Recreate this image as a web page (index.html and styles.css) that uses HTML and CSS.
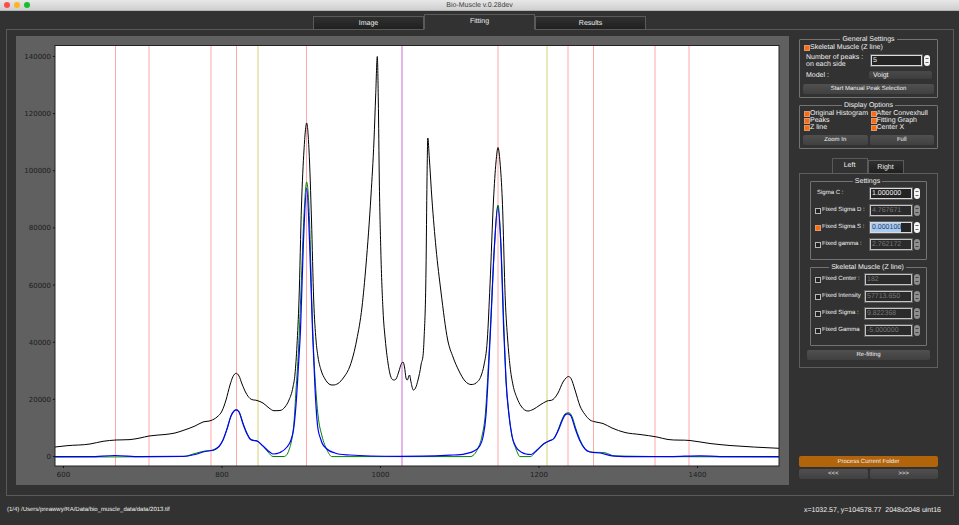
FILE: index.html
```html
<!DOCTYPE html>
<html lang="en">
<head>
<meta charset="utf-8">
<title>Bio-Muscle v.0.28dev</title>
<link rel="stylesheet" href="styles.css">
</head>
<body>
<header class="titlebar">
  <div class="lights"><i class="light close"></i><i class="light minimize"></i><i class="light expand"></i></div>
  <h1 class="title">Bio-Muscle v.0.28dev</h1>
</header>
<nav class="tabs main-tabs">
  <button class="tab">Image</button>
  <button class="tab active">Fitting</button>
  <button class="tab">Results</button>
</nav>
<main class="panel">
  <div class="chart">
    <svg viewBox="16 36 773 449" role="img" aria-label="Fitting graph">
      <rect x="55" y="45.5" width="724" height="420.5" fill="#fff"/>
      <g id="markers"></g>
      <g id="curves" fill="none" stroke-width="1" stroke-linejoin="round"></g>
      <rect x="55" y="45.5" width="724" height="420.5" fill="none" stroke="#222" stroke-width="1"/>
      <g id="axes" class="axis"></g>
    </svg>
  </div>
  <aside class="side">
    <fieldset class="group general">
      <legend>General Settings</legend>
      <label class="check"><input type="checkbox" checked>Skeletal Muscle (Z line)</label>
      <div class="row peaks">
        <label for="peaks">Number of peaks :<br>on each side</label>
        <input class="field" id="peaks" type="text" value="5">
        <span class="spin"><button aria-label="More peaks"></button><button aria-label="Fewer peaks"></button></span>
      </div>
      <div class="row model">
        <label for="model">Model :</label>
        <select id="model"><option>Voigt</option></select>
      </div>
      <button class="btn">Start Manual Peak Selection</button>
    </fieldset>
    <fieldset class="group display">
      <legend>Display Options</legend>
      <div class="pair">
        <label class="check"><input type="checkbox" checked>Original Histogram</label>
        <label class="check"><input type="checkbox" checked>After Convexhull</label>
        <label class="check"><input type="checkbox" checked>Peaks</label>
        <label class="check"><input type="checkbox" checked>Fitting Graph</label>
        <label class="check"><input type="checkbox" checked>Z line</label>
        <label class="check"><input type="checkbox" checked>Center X</label>
      </div>
      <div class="pair actions">
        <button class="btn">Zoom In</button>
        <button class="btn">Full</button>
      </div>
    </fieldset>
    <nav class="tabs side-tabs">
      <button class="tab active">Left</button>
      <button class="tab">Right</button>
    </nav>
    <section class="pane">
      <fieldset class="group params">
        <legend>Settings</legend>
        <div class="row">
          <label for="sc">Sigma C :</label>
          <input class="field" id="sc" type="text" value="1.000000">
          <span class="spin"><button aria-label="Increase"></button><button aria-label="Decrease"></button></span>
        </div>
        <div class="row">
          <label class="check"><input type="checkbox">Fixed Sigma D :</label>
          <input class="field" aria-label="Sigma D" type="text" value="4.767671" disabled>
          <span class="spin off"><button aria-label="Increase" disabled></button><button aria-label="Decrease" disabled></button></span>
        </div>
        <div class="row">
          <label class="check"><input type="checkbox" checked>Fixed Sigma S :</label>
          <input class="field selected" aria-label="Sigma S" type="text" value="0.000100">
          <span class="spin"><button aria-label="Increase"></button><button aria-label="Decrease"></button></span>
        </div>
        <div class="row">
          <label class="check"><input type="checkbox">Fixed gamma :</label>
          <input class="field" aria-label="Gamma" type="text" value="2.762172" disabled>
          <span class="spin off"><button aria-label="Increase" disabled></button><button aria-label="Decrease" disabled></button></span>
        </div>
      </fieldset>
      <fieldset class="group params wide">
        <legend>Skeletal Muscle (Z line)</legend>
        <div class="row">
          <label class="check"><input type="checkbox">Fixed Center :</label>
          <input class="field" aria-label="Center" type="text" value="182" disabled>
          <span class="spin off"><button aria-label="Increase" disabled></button><button aria-label="Decrease" disabled></button></span>
        </div>
        <div class="row">
          <label class="check"><input type="checkbox">Fixed Intensity</label>
          <input class="field" aria-label="Intensity" type="text" value="57713.650" disabled>
          <span class="spin off"><button aria-label="Increase" disabled></button><button aria-label="Decrease" disabled></button></span>
        </div>
        <div class="row">
          <label class="check"><input type="checkbox">Fixed Sigma :</label>
          <input class="field" aria-label="Sigma" type="text" value="9.822368" disabled>
          <span class="spin off"><button aria-label="Increase" disabled></button><button aria-label="Decrease" disabled></button></span>
        </div>
        <div class="row">
          <label class="check"><input type="checkbox">Fixed Gamma</label>
          <input class="field" aria-label="Gamma of Z line" type="text" value="-5.000000" disabled>
          <span class="spin off"><button aria-label="Increase" disabled></button><button aria-label="Decrease" disabled></button></span>
        </div>
      </fieldset>
      <button class="btn">Re-fitting</button>
    </section>
    <div class="process">
      <button class="btn primary">Process Current Folder</button>
      <div class="pair">
        <button class="btn">&lt;&lt;&lt;</button>
        <button class="btn">&gt;&gt;&gt;</button>
      </div>
    </div>
  </aside>
</main>
<footer class="status">
  <span class="path">(1/4) /Users/preawwy/RA/Data/bio_muscle_data/data/2013.tif</span>
  <span class="coords">x=1032.57, y=104578.77  2048x2048 uint16</span>
</footer>
<script src="chart.js"></script>
</body>
</html>
```
FILE: styles.css
```css
* { box-sizing: border-box; }

body {
  margin: 0;
  min-height: 100vh;
  display: flex;
  flex-direction: column;
  background: #323232;
  color: #f0f0f0;
  font: 7px/7px "Liberation Sans", Arial, sans-serif;
  text-rendering: geometricPrecision;
}

button, input, select {
  margin: 0;
  padding: 0;
  font: inherit;
  color: inherit;
  text-rendering: inherit;
}

.titlebar {
  height: 11px;
  display: grid;
  grid-template-columns: 1fr auto 1fr;
  align-items: center;
  background: linear-gradient(#e8e8e8, #cfcfcf);
  border-bottom: 1px solid #b4b4b4;
}
.lights { display: flex; gap: 4px; padding-left: 4px; }
.light { width: 6px; height: 6px; border-radius: 50%; }
.close { background: #fc4f4b; }
.minimize { background: #fdb524; }
.expand { background: #18bd2e; }
.title { margin: 0; font-size: 7px; font-weight: 400; color: #3c3c3c; }

.tabs { display: flex; justify-content: center; align-items: flex-end; }
.tab {
  border: 1px solid #5a5a5a;
  background: linear-gradient(#303030, #202020);
}
.tab.active {
  background: #323232;
  border-bottom-color: #323232;
}
.main-tabs { height: 19px; margin-bottom: -1px; }
.main-tabs .tab { width: 111px; height: 14px; }
.main-tabs .tab.active { height: 16px; padding-bottom: 2px; z-index: 1; }

.panel {
  flex: 1;
  display: flex;
  gap: 10px;
  margin: 0 5px 0 6px;
  padding: 6px 15px 10px 9px;
  border: 1px solid #5a5a5a;
}

.chart { flex: 1; min-width: 0; background: #606060; }
.chart svg { display: block; width: 100%; height: 100%; }
.axis { font: 7px "DejaVu Sans", sans-serif; fill: #1c1c1c; }

.side { width: 139px; display: flex; flex-direction: column; }

.group {
  min-width: 0;
  margin: 0;
  padding: 0 3px;
  border: 1px solid #737373;
  border-radius: 1px;
}
.group legend { margin: 0 auto; padding: 0 2px; }

.check { display: flex; align-items: center; height: 7px; white-space: nowrap; }
.check input {
  appearance: none;
  flex: none;
  width: 6px;
  height: 6px;
  border: 1px solid #b8b8b8;
  background: #222;
}
.check input:checked { background: #ff6a0d; border-color: #d99a72; }

.general { height: 62px; padding: 1px 3px 0; }
.general .check, .display .check { margin-left: 1px; }
.general .row label { flex: 1; padding-left: 3px; }
.peaks { height: 19px; }
.model { height: 10px; }

.row { display: flex; align-items: center; }
.field {
  height: 11px;
  padding: 0 1px;
  border: 1px solid #dcdcdc;
  outline: 1px solid #5c5c5c;
  background-color: #242424;
}
.field:disabled { color: #777; background-color: #2b2b2b; border-color: #c4c4c4; }
.selected {
  color: #26415f;
  background-image: linear-gradient(#a9cbf4, #a9cbf4);
  background-repeat: no-repeat;
  background-size: 30px 100%;
}
.spin {
  width: 6px;
  height: 11px;
  margin-left: 2px;
  display: flex;
  flex-direction: column;
  justify-content: center;
  align-items: center;
  gap: 3px;
  border-radius: 3px;
  background: #f4f4f4;
}
.spin button {
  width: 4px;
  height: 1px;
  border: solid transparent;
  border-width: 0 1px 1px;
  border-bottom-color: #666;
  background: none;
}
.spin button + button { border-width: 1px 1px 0; border-top-color: #666; }
.spin.off { background: #8e8e8e; }
.spin.off button { border-bottom-color: #444; }
.spin.off button + button { border-top-color: #444; }

.peaks .field { width: 51px; }
.peaks .spin { margin-right: 4px; }
.model select {
  appearance: none;
  width: 63px;
  height: 8px;
  margin-right: 2px;
  padding-left: 4px;
  border: 0;
  border-radius: 2px;
  background: linear-gradient(#4a4a4a, #3e3e3e);
}

.btn {
  display: block;
  width: 100%;
  height: 10px;
  border: 0;
  border-radius: 2px;
  background: linear-gradient(#505050, #404040);
  font-size: 6px;
  line-height: 8px;
}
.general > .btn { margin-top: 4px; }

.display { height: 47px; margin-top: 4px; }
.pair { display: grid; grid-template-columns: repeat(2, minmax(0, 1fr)); column-gap: 2px; }
.display .pair:first-of-type { padding-top: 1px; }
.display .actions { margin-top: 4px; }

.side-tabs { height: 16px; margin: 9px 0 -1px; padding-right: 2px; }
.side-tabs .tab { width: 36px; height: 14px; }
.side-tabs .tab.active { height: 16px; padding-bottom: 2px; }

.pane { padding: 4px 7px 7px; border: 1px solid #5e5e5e; }
.params { height: 82px; margin: 0 3px 4px; padding: 0 6px 0 4px; }
.params .row { height: 17px; }
.params .row label { flex: 1; min-width: 0; font-size: 6px; }
.params .row label:not(.check) { padding-left: 2px; }
.params .check input { margin-right: 1px; }
.params .field { width: 42px; }
.params.wide .field { width: 47px; }

.process { margin-top: auto; padding-bottom: 6px; display: grid; gap: 2px; }
.primary { height: 11px; background: #b2640b; }

.status {
  height: 29px;
  padding: 0 18px 0 7px;
  display: flex;
  justify-content: space-between;
  align-items: center;
}
.path { font-size: 6px; }
.coords { white-space: pre; }
```
FILE: chart.js
```js
const NS = 'http://www.w3.org/2000/svg';

function add(parent, name, attrs, text) {
  const el = document.createElementNS(NS, name);
  for (const key in attrs) el.setAttribute(key, attrs[key]);
  if (text !== undefined) el.textContent = text;
  document.getElementById(parent).appendChild(el);
}

// Cubic path with limited tangents, so the peaks stay smooth and do not overshoot.
function smooth(flat) {
  const p = [];
  for (let i = 0; i < flat.length; i += 2) p.push([flat[i], flat[i + 1]]);
  const n = p.length, d = [], m = [];
  for (let i = 0; i < n - 1; i++) d.push((p[i + 1][1] - p[i][1]) / (p[i + 1][0] - p[i][0]));
  for (let i = 0; i < n; i++) {
    if (i === 0 || i === n - 1) m.push(d[Math.min(i, n - 2)]);
    else if (d[i - 1] * d[i] <= 0) m.push(0);
    else {
      const a = p[i][0] - p[i - 1][0], b = p[i + 1][0] - p[i][0];
      const slope = (d[i - 1] * b + d[i] * a) / (a + b);
      const limit = 3 * Math.min(Math.abs(d[i - 1]), Math.abs(d[i]));
      m.push(Math.sign(slope) * Math.min(Math.abs(slope), limit));
    }
  }
  let s = `M${p[0]}`;
  for (let i = 0; i < n - 1; i++) {
    const h = (p[i + 1][0] - p[i][0]) / 3;
    s += `C${p[i][0] + h},${p[i][1] + m[i] * h} ${p[i + 1][0] - h},${p[i + 1][1] - m[i + 1] * h} ${p[i + 1]}`;
  }
  return s;
}

const peak = '#ffa8a8', line = '#d2d278', center = '#cf6ad6';
const markers = [[115.5, peak], [149, peak], [211, peak], [236.5, peak], [258, line], [306.5, peak],
  [402, center], [498, peak], [547, line], [568, peak], [593.5, peak], [655, peak], [689, peak]];
for (const [x, stroke] of markers) add('markers', 'path', { d: `M${x} 46V466`, stroke });

const histogram = [55,447,67,445.7,90,444,103,441.3,116,440,130,439.6,140,438,149,436,165,434.5,175,433,183,430.5,195,426,203,422,211,420.5,217,417,222,411,226,400,230,385,233,376.5,236.3,373.3,239,376,242,384,246,393,250,398.5,257,400.5,263,403,269,408,274,410.7,280,410.5,285,407,289,400,293,387,295,374,297,345,299,300,301.5,205,304,150,306.7,123,309,150,311.5,220,313.7,300,316,340,318,357,321,370,325,379,329,384,333,385,338,383.5,344,377,350,366,356.7,340,362,307,366,265,371,195,374,140,375.7,95,377.3,56.5,378.3,100,379.3,180,380.8,250,383,310,385.3,340,388,363,390,374,394,380,396,379,399,371,401,364.5,403,362,404.5,367,406,378,407.3,380,409.5,375,411,382,413.3,390,415.5,388,418,380,421,365,424,340,426,270,427,180,427.8,138,429.3,158,432,200,436,248,441,292,447.7,340,453,357,459,371,465,381,471,384.5,476,383,481,376,484,365,487.3,340,490,285,493.5,200,496,162,498,147.5,500,162,502.3,200,505.3,300,507.7,340,510,366,513,385,517,398,521,406,528,411,533,409.5,540,405,547,401,553,399.5,558,393,563,382,566,378,568.5,376.5,571,378.5,575,390,580,406,585,414.5,590,420,595,421.8,603,423.5,612,428,625,432.5,640,434.5,657,437,668,439.5,690,440.5,710,443.5,730,445.5,779,448.3];
const graph = [55,457,183,456.5,195,453.5,205,451,213,450.5,219,446.5,223,440,227,429,231,416,234,411,236.3,409.8,239.3,412,243,423,247,433,250,438.5,258,441.5,263,446,268,452,273,456.5,284,456.5,289,450,292,438,294,422,296,390,298.5,350,301,290,304,215,306.7,182,309.5,220,312,310,313.5,350,315.5,385,318,415,322,436,327,450,332,456.6,470,456.6,478,448,482,436,485.5,412,488,372,490.3,330,494.5,246,498,205,501,246,504,330,506,380,509,415,512,436,516,449,520,456.6,530,456.6,537,450.5,544,444,549,441,554,438,558,430,562,419.5,565,414,569,412.8,572,416.5,576,429,581,442,586,450,592,452,605,452.8,615,456,779,457];
const fit = [55,456.6,90,456.7,115,455.5,140,456.6,183,456.4,195,454.5,205,451.5,213,450,219,446.5,223,440,227,429,231,416,234,411,236.3,409.8,239,412,243,424,247,434,250,439,258,441.5,263,446,269,451.5,273,454,280,452.5,287,447,291,440,293.5,430,296,405,298.5,365,300.5,330,303.5,240,306.7,188,309.5,240,312.5,330,315,388,317,420,321,440,327,449,335,453,350,455,400,456.3,450,455.2,465,453.8,475,450.5,479,447,483,437,486,415,488.5,370,490.5,330,494.3,248,497.7,207,501,248,503.7,330,506,380,509,415,512,436,516,447,522,452.5,531,454.5,537,450,544,443.5,549,441,554,438.5,558,431,562,421,565,415,568,413.8,571,416,575,428,580,441,585,449,590,452,600,453,612,455.8,630,456.6,670,456.6,700,455.8,720,456.6,779,456.7];
add('curves', 'path', { d: smooth(histogram), stroke: '#000' });
add('curves', 'path', { d: smooth(graph), stroke: '#008000' });
add('curves', 'path', { d: smooth(fit), stroke: '#00f', 'stroke-width': 1.2 });

for (let i = 0; i <= 7; i++) {
  const y = 456.5 - i * 57.15;
  add('axes', 'path', { d: `M53 ${y}h2`, stroke: '#111' });
  add('axes', 'text', { x: 51, y: y + 2.5, 'text-anchor': 'end' }, i * 20000);
}
for (let i = 0; i < 5; i++) {
  const x = 63.5 + i * 158.5;
  add('axes', 'path', { d: `M${x} 466v2`, stroke: '#111' });
  add('axes', 'text', { x, y: 477, 'text-anchor': 'middle' }, 600 + i * 200);
}
```
